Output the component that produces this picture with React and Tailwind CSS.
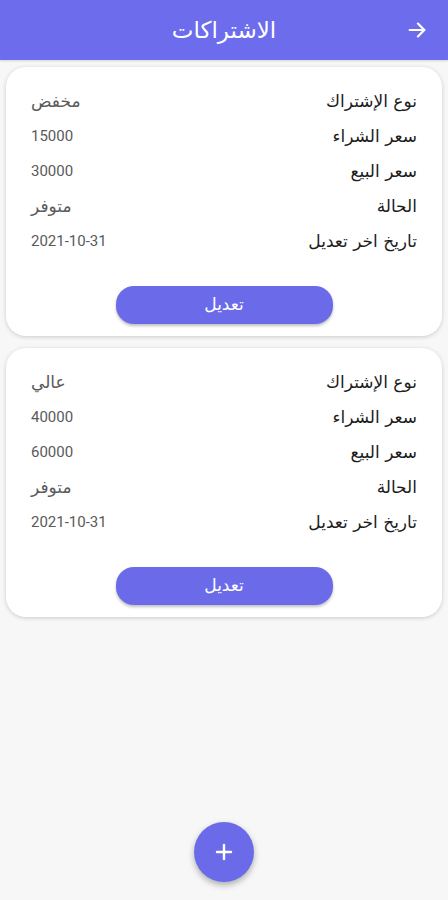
import React from "react";

// subscription cards data
const plans = [
  { type: "مخفض", buy: "15000", sell: "30000", status: "متوفر", date: "2021-10-31" },
  { type: "عالي", buy: "40000", sell: "60000", status: "متوفر", date: "2021-10-31" },
];

const arabic = { fontFamily: '"DejaVu Sans", "Noto Sans", sans-serif' };

const isDigits = (v) => /^[0-9-]+$/.test(v);

const Row = ({ label, value }) => (
  <div className="flex items-center justify-between h-[35px]">
    <span className="text-[17px] text-[#1c1c1c]">{label}</span>
    {isDigits(value) ? (
      <span className="text-[15px] text-[#5a5a5a] font-['Roboto',sans-serif]">{value}</span>
    ) : (
      <span className="text-[17px] text-[#5a5a5a]">{value}</span>
    )}
  </div>
);

const PlanCard = ({ plan }) => (
  <div className="bg-white rounded-[20px] shadow-[0_1px_4px_rgba(0,0,0,0.18)] mx-[6px] pt-[17px] pb-[12px] px-[25px]">
    <Row label="نوع الإشتراك" value={plan.type} />
    <Row label="سعر الشراء" value={plan.buy} />
    <Row label="سعر البيع" value={plan.sell} />
    <Row label="الحالة" value={plan.status} />
    <Row label="تاريخ اخر تعديل" value={plan.date} />
    <div className="flex justify-center mt-[27px]">
      <button className="w-[217px] h-[38px] rounded-[18px] bg-[#6b6bea] text-white text-[17px] shadow-[0_2px_3px_rgba(0,0,0,0.25)]">
        تعديل
      </button>
    </div>
  </div>
);

export default function App() {
  return (
    <div dir="rtl" style={arabic} className="w-[448px] h-[900px] bg-[#f7f7f7] flex flex-col relative overflow-hidden">
      {/* header */}
      <div className="h-[60px] bg-[#6c6cec] flex items-center relative shadow-[0_1px_2px_rgba(0,0,0,0.15)]">
        <div className="w-[60px] flex items-center justify-center pr-[2px]">
          <svg width="22" height="22" viewBox="0 0 24 24" fill="none" stroke="white" strokeWidth="2.4" strokeLinecap="round" strokeLinejoin="round">
            <path d="M4 12h16" />
            <path d="M13 5l7 7-7 7" />
          </svg>
        </div>
        <h1 className="absolute left-0 right-0 text-center text-white text-[23px] font-normal pointer-events-none">
          الاشتراكات
        </h1>
      </div>

      {/* cards */}
      <div className="flex flex-col gap-[12px] mt-[7px]">
        {plans.map((p, i) => (
          <PlanCard key={i} plan={p} />
        ))}
      </div>

      {/* add button */}
      <div className="mt-auto mb-[18px] flex justify-center">
        <button className="w-[60px] h-[60px] rounded-full bg-[#6b6bea] flex items-center justify-center shadow-[0_3px_6px_rgba(0,0,0,0.3)]">
          <svg width="18" height="18" viewBox="0 0 18 18" stroke="white" strokeWidth="2.4" strokeLinecap="round">
            <path d="M9 2v14M2 9h14" />
          </svg>
        </button>
      </div>
    </div>
  );
}
